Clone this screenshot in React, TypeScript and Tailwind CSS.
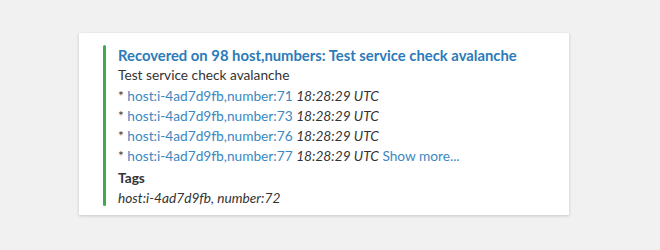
import React from "react";

const rows = ["71", "73", "76", "77"];

const App = () => {
  return (
    <div
      className="w-[660px] h-[250px] bg-[#f0f1f0] pt-[33px] pl-[79px]"
      style={{ fontFamily: "Lato, 'Open Sans', sans-serif" }}>
      <div className="w-[490px] h-[182px] bg-white shadow-[0_1px_3px_rgba(0,0,0,0.18)] pt-3 pl-6">
        <div className="flex">
          <div className="w-[3px] h-[161px] bg-[#3fa94f] rounded-sm" />
          <div className="pl-3 text-[13.7px] leading-5 text-[#333]">
            <div className="text-[14.8px] font-bold text-[#2c7bb8]">
              Recovered on 98 host,numbers: Test service check avalanche
            </div>
            <div>Test service check avalanche</div>
            <div className="mt-px">
              {rows.map((n, i) => (
                <div key={n}>
                  * <span className="text-[#3a88c2]">host:i-4ad7d9fb,number:{n}</span>{" "}
                  <span className="italic">18:28:29 UTC</span>
                  {i === rows.length - 1 && (
                    <span className="text-[#3a88c2]"> Show more...</span>
                  )}
                </div>
              ))}
            </div>
            <div className="font-bold mt-[2px]">Tags</div>
            <div className="italic leading-[19px]">host:i-4ad7d9fb, number:72</div>
          </div>
        </div>
      </div>
    </div>
  );
};

export default App;
